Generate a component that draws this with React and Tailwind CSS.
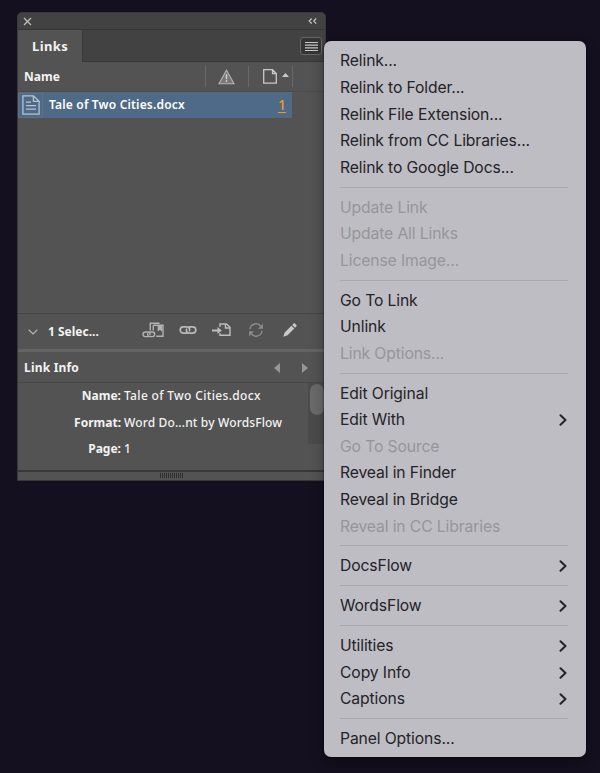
import React from 'react';

const MENU_GROUPS = [
  [
    { label: 'Relink...' },
    { label: 'Relink to Folder...' },
    { label: 'Relink File Extension...' },
    { label: 'Relink from CC Libraries...' },
    { label: 'Relink to Google Docs...' },
  ],
  [
    { label: 'Update Link', disabled: true },
    { label: 'Update All Links', disabled: true },
    { label: 'License Image...', disabled: true },
  ],
  [
    { label: 'Go To Link' },
    { label: 'Unlink' },
    { label: 'Link Options...', disabled: true },
  ],
  [
    { label: 'Edit Original' },
    { label: 'Edit With', submenu: true },
    { label: 'Go To Source', disabled: true },
    { label: 'Reveal in Finder' },
    { label: 'Reveal in Bridge' },
    { label: 'Reveal in CC Libraries', disabled: true },
  ],
  [{ label: 'DocsFlow', submenu: true }],
  [{ label: 'WordsFlow', submenu: true }],
  [
    { label: 'Utilities', submenu: true },
    { label: 'Copy Info', submenu: true },
    { label: 'Captions', submenu: true },
  ],
  [{ label: 'Panel Options...' }],
];

const LINK_INFO = [
  { label: 'Name:', value: 'Tale of Two Cities.docx', tracking: 'tracking-[0.33px]' },
  { label: 'Format:', value: 'Word Do...nt by WordsFlow', tracking: 'tracking-[0.15px]' },
  { label: 'Page:', value: '1', tracking: 'tracking-normal' },
];

function MenuItem({ item }) {
  return (
    <li
      className={`flex h-[26.58px] items-center justify-between pr-[1px] ${
        item.disabled ? 'text-[#96959b]' : 'text-[#242328]'
      }`}
    >
      <span>{item.label}</span>
      {item.submenu && (
        <svg width="8" height="12" viewBox="0 0 8 12" fill="none" stroke="currentColor" strokeWidth="2" strokeLinecap="round" strokeLinejoin="round">
          <path d="M1.5 1.3 6.5 6l-5 4.7" />
        </svg>
      )}
    </li>
  );
}

function PanelMenu() {
  return (
    <div className="absolute top-[41px] left-[323.5px] h-[716px] w-[262px] rounded-[7px] bg-[#bebdc3] pt-[7px] pr-[17.5px] pl-[16.5px] font-[Inter,'Liberation_Sans',sans-serif] text-[15.7px] leading-none tracking-[-0.12px] whitespace-nowrap shadow-[0_0_2px_rgba(0,0,0,0.7),0_6px_14px_rgba(0,0,0,0.3)]">
      {MENU_GROUPS.map((group, i) => (
        <ul key={group[0].label}>
          {i > 0 && (
            <li className="flex h-[13.3px] items-center pb-[1px]">
              <span className="h-px w-full bg-[#a9a8ae]" />
            </li>
          )}
          {group.map((item) => (
            <MenuItem key={item.label} item={item} />
          ))}
        </ul>
      ))}
    </div>
  );
}

function TitleBar() {
  return (
    <div className="flex h-[17px] items-center justify-between border-b border-[#363636] bg-[#424242] pr-[8px] pl-[5px]">
      <svg width="9" height="9" viewBox="0 0 9 9" stroke="#bdbdbd" strokeWidth="1.3">
        <path d="m1 1 7 7M8 1 1 8" />
      </svg>
      <svg width="9" height="6" viewBox="0 0 9 6" fill="none" stroke="#c4c4c4" strokeWidth="1.2">
        <path d="M3.7.5 1.2 3l2.5 2.5M8.2.5 5.7 3l2.5 2.5" />
      </svg>
    </div>
  );
}

function TabBar() {
  return (
    <div className="flex h-[32px] justify-between bg-[#424242]">
      <div className="flex w-[65px] items-center border-r border-[#393939] bg-[#535353] pt-[1px] pl-[14px] text-[13px] tracking-[0.4px]">Links</div>
      <div className="flex flex-1 items-start justify-end border-b border-[#383838] pt-[7px] pr-[3px]">
        <div className="flex h-[18px] w-[22px] items-center justify-center rounded-[3px] border border-[#686868] bg-[#353535]">
          <svg width="13" height="9" viewBox="0 0 13 9" stroke="#c8c8c8" strokeWidth="1.2">
            <path d="M0 .5h13M0 3.2h13M0 5.8h13M0 8.5h13" />
          </svg>
        </div>
      </div>
    </div>
  );
}

function ColumnHeader() {
  return (
    <div className="flex h-[30px] items-center border-b border-[#4b4b4b] text-[12px]">
      <div className="w-[187px] pl-[6px]">Name</div>
      <div className="flex h-[21px] w-[44px] items-center justify-center border-x border-[#696969] pr-[2px]">
        <svg width="17" height="16" viewBox="0 0 17 16">
          <path d="M8.5 1.2 16 14.7H1z" fill="#777" stroke="#b5b5b5" strokeWidth="1.1" />
          <path d="M8.5 5.3v5M8.5 11.3v1.7" stroke="#d3d3d3" strokeWidth="1.4" />
        </svg>
      </div>
      <div className="flex h-[21px] w-[44px] items-center border-r border-[#696969] pl-[14px]">
        <svg width="14" height="15" viewBox="0 0 14 15" fill="none" stroke="#c9c9c9" strokeWidth="1.3">
          <path d="M.7.7h8.8l3.8 3.8v9.6H.7zM9.5.7v3.8h3.8" />
        </svg>
        <svg className="mb-[3px] ml-[5px]" width="7" height="4" viewBox="0 0 7 4" fill="#c9c9c9">
          <path d="M0 4 3.5 0 7 4z" />
        </svg>
      </div>
    </div>
  );
}

function LinkRow() {
  return (
    <div className="flex h-[26px] w-[274px] items-center bg-[#4e6a86] text-[12px]">
      <div className="flex h-[25px] w-[25px] items-center justify-center border border-[#5c7289]">
        <svg width="18" height="20" viewBox="0 0 18 20" fill="none" stroke="#b9c4cf" strokeWidth="1.3">
          <path d="M.9.9h10.5l5.7 5.5v12.7H.9zM11.4.9v5.5h5.7" />
          <path d="M4 7.2h5M4 10.6h10M4 14.2h10" />
        </svg>
      </div>
      <span className="pl-[6px] font-semibold tracking-[0.18px] text-white">Tale of Two Cities.docx</span>
      <span className="mr-[6px] mb-[2px] ml-auto h-[17px] border-b border-[#f59b1b] text-[14px] leading-[17px] font-medium text-[#f59b1b]">1</span>
    </div>
  );
}

function Toolbar() {
  return (
    <div className="flex h-[36px] items-center border-t border-[#464646] text-[12px]">
      <svg className="ml-[10px]" width="10" height="6" viewBox="0 0 10 6" fill="none" stroke="#b5b5b5" strokeWidth="1.2">
        <path d="m.7.7 4.3 4.2L9.3.7" />
      </svg>
      <span className="w-[104px] pl-[10px]">1 Selec...</span>
      {/* relink from CC library */}
      <svg className="mb-[4px]" width="23" height="16" viewBox="0 0 23 16" fill="none" stroke="#b3b3b3" strokeWidth="1.4">
        <path d="M8.3 8.4V1.2h9.2M11.3 8.4V3.2M14.3 14.2H21V3.2h-9.7" />
        <path d="M15.7 3.2H20v6.6l-2.1-2-2.2 2z" fill="#b3b3b3" stroke="none" />
        <path d="M6.4 14.6H3.3a2.3 2.3 0 0 1 0-4.6h2.5a2.3 2.3 0 0 1 2.1 3.3M7.4 10h3a2.3 2.3 0 0 1 0 4.6H8a2.3 2.3 0 0 1-2.1-3.3" />
      </svg>
      <svg className="mb-[3px] ml-[14px]" width="18" height="10" viewBox="0 0 18 10" fill="none" stroke="#b8b8b8" strokeWidth="1.7">
        <path d="M8.2 8.2H4.4a3.2 3.2 0 0 1 0-6.4h3.2c2.4 0 3.9 2.4 2.6 4.6M9.8 1.8h3.8a3.2 3.2 0 0 1 0 6.4h-3.2C8 8.2 6.5 5.8 7.8 3.6" />
      </svg>
      <svg className="mb-[4px] ml-[15px]" width="19" height="14" viewBox="0 0 19 14" fill="none" stroke="#bdbdbd" strokeWidth="1.4">
        <path d="M8 4V1h6.5L18 4.3V12.3H8v-2M13.5 1v4h4.5" />
        <path d="M0 7.5h6" strokeWidth="2" />
        <path d="m5.5 3.9 4.3 3.6-4.3 3.6z" fill="#bdbdbd" stroke="none" />
      </svg>
      <svg className="mb-[3px] ml-[17px]" width="16" height="14" viewBox="0 0 16 14" fill="none" stroke="#8b8b8b" strokeWidth="1.4">
        <path d="M2 6.3A6 6 0 0 1 13 3.6M14 7.7a6 6 0 0 1-11 2.7" />
        <path d="M14.9.7v5H9.9zM1.1 13.3v-5h5z" fill="#8b8b8b" stroke="none" />
      </svg>
      <svg className="mb-[3px] ml-[19px]" width="14" height="14" viewBox="0 0 14 14" fill="#c9c9c9">
        <path d="M8.4 2.7 1.7 9.4.3 13.7l4.3-1.5 6.7-6.6zM9.2 1.9 10.6.5q.7-.5 1.4.1l1.4 1.4q.6.7 0 1.3l-1.3 1.4z" />
      </svg>
    </div>
  );
}

function LinkInfo() {
  return (
    <>
      <div className="flex h-[31px] items-center justify-between border-b border-[#474747] pr-[17px] pl-[6px] text-[12px]">
        <span className="pt-[2px] tracking-[0.2px]">Link Info</span>
        <div className="flex gap-[22px] pt-[2px]">
          <svg width="6" height="10" viewBox="0 0 6 10" fill="#959595"><path d="M6 0v10L0 5z" /></svg>
          <svg width="6" height="10" viewBox="0 0 6 10" fill="#959595"><path d="M0 0v10l6-5z" /></svg>
        </div>
      </div>
      <div className="flex h-[87px] justify-between text-[12px]">
        <dl className="leading-[26.6px]">
          {LINK_INFO.map((row) => (
            <div key={row.label} className="flex">
              <dt className="w-[103px] text-right">{row.label}</dt>
              <dd className={`pl-[3px] font-medium ${row.tracking}`}>{row.value}</dd>
            </div>
          ))}
        </dl>
        <div className="h-[61px] w-[17px] bg-[#4b4b4b] pt-[1px] pl-[2px]">
          <div className="h-[31px] w-[14px] rounded-full bg-[#6a6a6a]" />
        </div>
      </div>
    </>
  );
}

export default function App() {
  return (
    <div className="relative h-[773px] w-[600px] overflow-hidden bg-[#14101f] pt-[12px] pl-[17px]">
      <div className="flex h-[469px] w-[309px] flex-col overflow-hidden rounded-t-[5px] border border-[#393939] bg-[#535353] font-['Noto_Sans','Open_Sans',sans-serif] font-bold whitespace-nowrap text-[#f2f2f2]">
        <TitleBar />
        <TabBar />
        <ColumnHeader />
        <div className="h-[221px] shrink-0">
          <LinkRow />
        </div>
        <Toolbar />
        <div className="h-[3px] bg-[#646464]" />
        <LinkInfo />
        <div className="flex h-[9px] justify-center border-t-2 border-[#383838] pt-[1px]">
          <div className="flex h-[5px] gap-[1px]">
            {Array.from({ length: 12 }, (_, i) => (
              <span key={i} className="w-px bg-[#303030]" />
            ))}
          </div>
        </div>
      </div>
      <PanelMenu />
    </div>
  );
}
